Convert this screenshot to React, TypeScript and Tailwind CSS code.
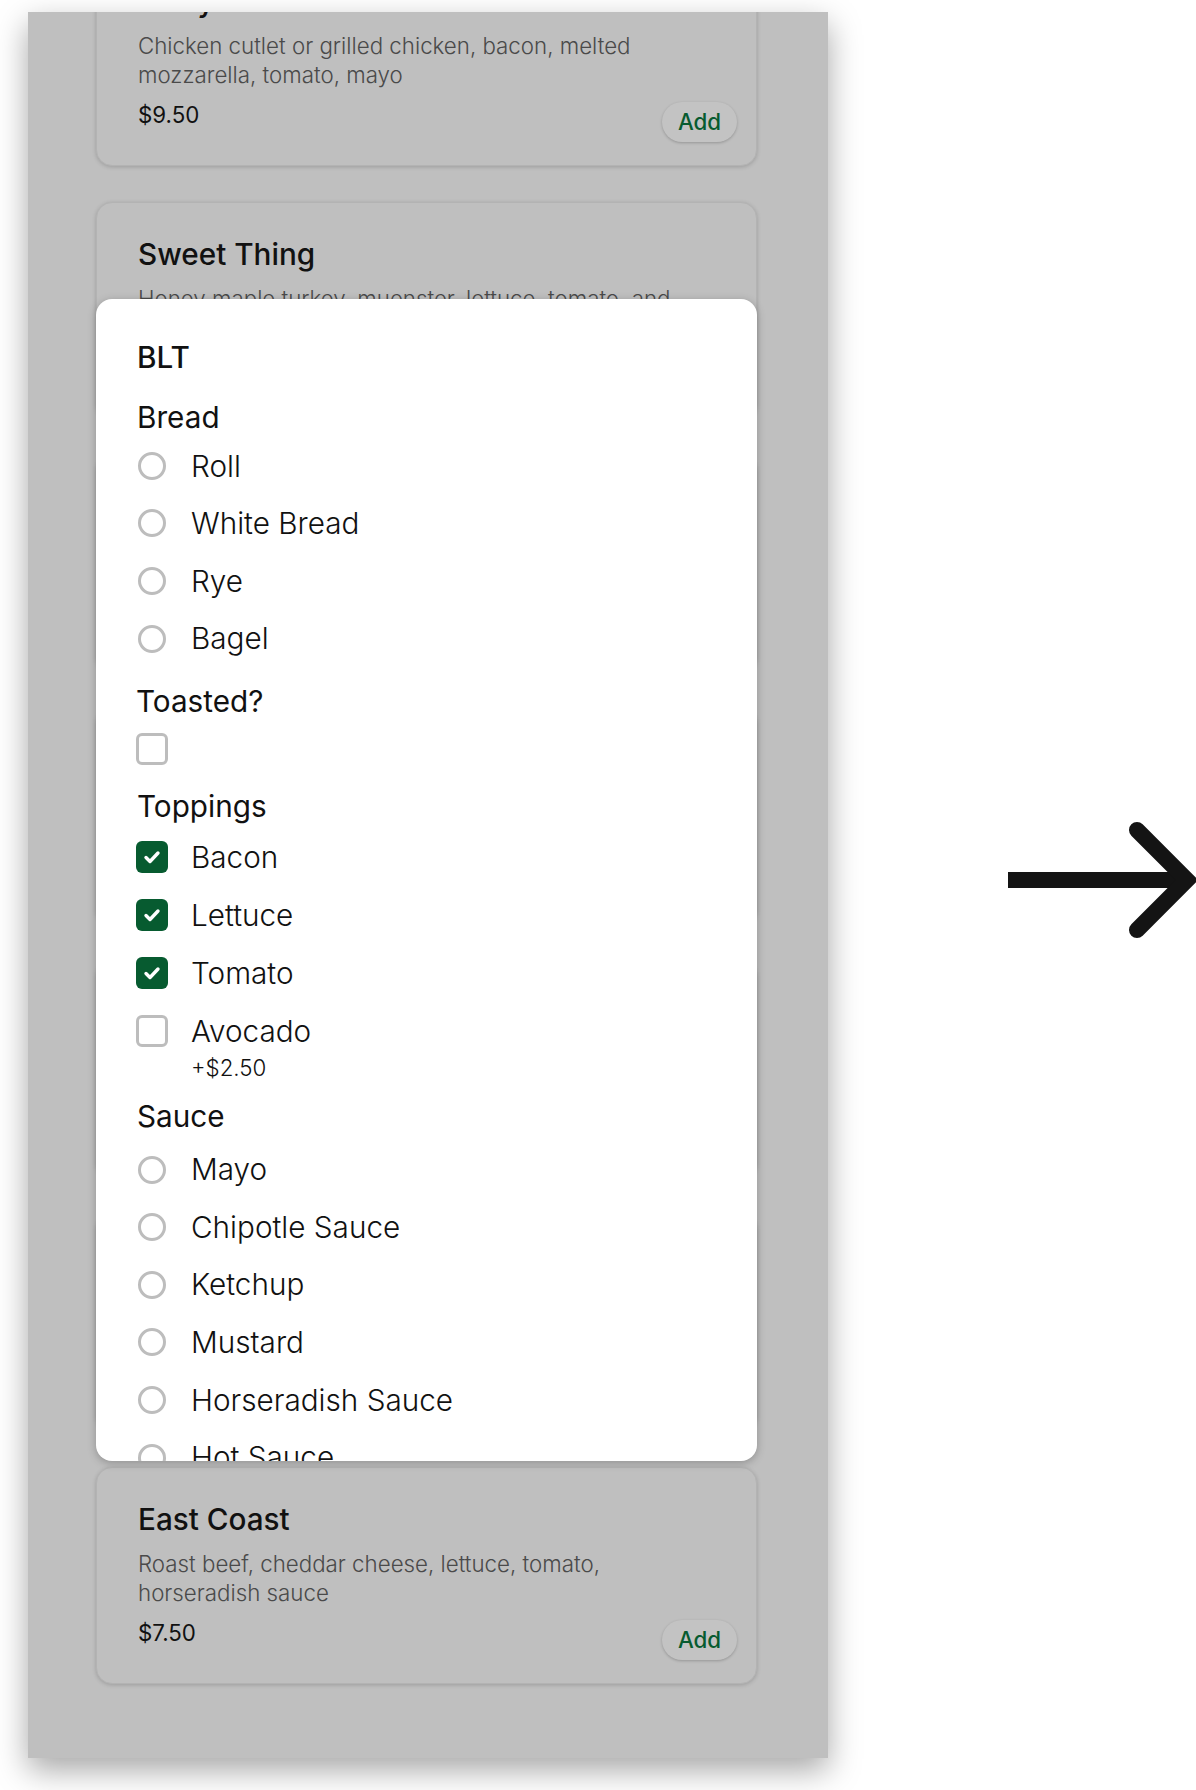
import React from "react";

type Card = { name: string; lines: string[]; price: string };

const cards: Card[] = [
  { name: "Philly", lines: ["Chicken cutlet or grilled chicken, bacon, melted", "mozzarella, tomato, mayo"], price: "$9.50" },
  { name: "Sweet Thing", lines: ["Honey maple turkey, muenster, lettuce, tomato, and", "honey mustard"], price: "$8.75" },
  { name: "BLT", lines: ["Bacon, lettuce, tomato, mayo on your choice of", "bread"], price: "$6.50" },
  { name: "Italian", lines: ["Salami, ham, capicola, provolone, lettuce, tomato,", "onion, oil and vinegar"], price: "$9.00" },
  { name: "Veggie", lines: ["Fresh mozzarella, roasted peppers, spinach,", "tomato, pesto"], price: "$7.75" },
  { name: "Turkey Club", lines: ["Turkey, bacon, swiss, lettuce, tomato, mayo", "on toasted bread"], price: "$8.50" },
  { name: "East Coast", lines: ["Roast beef, cheddar cheese, lettuce, tomato,", "horseradish sauce"], price: "$7.50" },
];

const MenuCard = ({ card }: { card: Card }) => (
  <div className="h-[217px] shrink-0 rounded-2xl bg-[#bfbfbf] border border-[#b3b3b3] shadow-[0_1px_4px_rgba(0,0,0,0.18)] pl-[41px] pr-[19px] pt-[33px]">
    <div className="text-[29.7px] leading-[36px] font-medium text-[#111]">{card.name}</div>
    <div className="mt-3 text-[22.3px] leading-[29px] font-light text-[#4a4a4a]">
      {card.lines.map((l) => (
        <div key={l} className="whitespace-nowrap">{l}</div>
      ))}
    </div>
    <div className="mt-[13px] flex items-start justify-between">
      <span className="text-[22.3px] leading-[26px] text-[#111]">{card.price}</span>
      <button className="w-[75px] h-[40px] rounded-full bg-[#c3c3c3] shadow-[0_1px_3px_rgba(0,0,0,0.22)] text-[22.3px] font-medium text-[#075b30]">
        Add
      </button>
    </div>
  </div>
);

const Radio = ({ label }: { label: string }) => (
  <div className="h-[57.6px] flex items-center">
    <div className="w-8 flex justify-center">
      <span className="w-[28px] h-[28px] rounded-full border-[3px] border-[#bdbdbd]" />
    </div>
    <span className="ml-[23px] text-[29.7px] font-light text-[#111] whitespace-nowrap">{label}</span>
  </div>
);

const Check = ({ label, checked }: { label?: string; checked?: boolean }) => (
  <div className="h-[57.8px] flex items-center">
    {checked ? (
      <span className="w-8 h-8 rounded-[6px] bg-[#075b30] flex items-center justify-center">
        <svg width="22" height="22" viewBox="0 0 22 22" fill="none">
          <path d="M5 11.5l4 4 8-8.5" stroke="white" strokeWidth="3.4" strokeLinecap="round" strokeLinejoin="round" />
        </svg>
      </span>
    ) : (
      <span className="w-8 h-8 rounded-[6px] border-[3px] border-[#bdbdbd]" />
    )}
    {label && <span className="ml-[23px] text-[29.7px] font-light text-[#111]">{label}</span>}
  </div>
);

const Heading = ({ children, className }: { children: React.ReactNode; className: string }) => (
  <div className={`text-[29.7px] leading-[36px] text-[#111] ${className}`}>{children}</div>
);

export default function App() {
  return (
    <div className="flex w-[1196px] h-[1790px] overflow-hidden bg-white font-['Inter','Liberation_Sans',sans-serif]">
      <div className="relative shrink-0 ml-[28px] mt-[12px] w-[800px] h-[1746px] bg-[#bfbfbf] overflow-hidden shadow-[0_12px_30px_rgba(0,0,0,0.35)]">
        <div className="flex flex-col gap-[36px] pl-[68px] pr-[71px] -mt-[63px]">
          {cards.map((c) => (
            <MenuCard key={c.name} card={c} />
          ))}
        </div>

        <div className="absolute left-[68px] top-[287px] w-[661px] h-[1162px] rounded-2xl bg-white overflow-hidden shadow-[0_2px_8px_rgba(0,0,0,0.25)] pl-[40px] pt-[40px]">
          <div className="pl-px text-[29.7px] leading-[36px] font-medium text-[#111]">BLT</div>

          <Heading className="mt-6 pl-px">Bread</Heading>
          <div className="mt-[2px]">
            {["Roll", "White Bread", "Rye", "Bagel"].map((o) => (
              <Radio key={o} label={o} />
            ))}
          </div>

          <Heading className="mt-[16px]">Toasted?</Heading>
          <div className="mt-px">
            <Check />
          </div>

          <Heading className="mt-[10px] pl-px">Toppings</Heading>
          <div className="mt-[4.4px]">
            <Check label="Bacon" checked />
            <Check label="Lettuce" checked />
            <Check label="Tomato" checked />
            <Check label="Avocado" />
            <div className="-mt-[4px] pl-[55px] text-[22.3px] leading-[24px] font-light text-[#111]">+$2.50</div>
          </div>

          <Heading className="mt-[18px] pl-px">Sauce</Heading>
          <div className="mt-[7px]">
            {["Mayo", "Chipotle Sauce", "Ketchup", "Mustard", "Horseradish Sauce", "Hot Sauce", "BBQ Sauce"].map((o) => (
              <Radio key={o} label={o} />
            ))}
          </div>
        </div>
      </div>

      <svg className="shrink-0 ml-[178px] mt-[815px]" width="200" height="130" viewBox="0 0 200 130" fill="none">
        <path d="M2 65H182" stroke="#141414" strokeWidth="16" />
        <path d="M131 15L181 65L131 115" stroke="#141414" strokeWidth="16" strokeLinecap="round" strokeLinejoin="miter" />
      </svg>
    </div>
  );
}
